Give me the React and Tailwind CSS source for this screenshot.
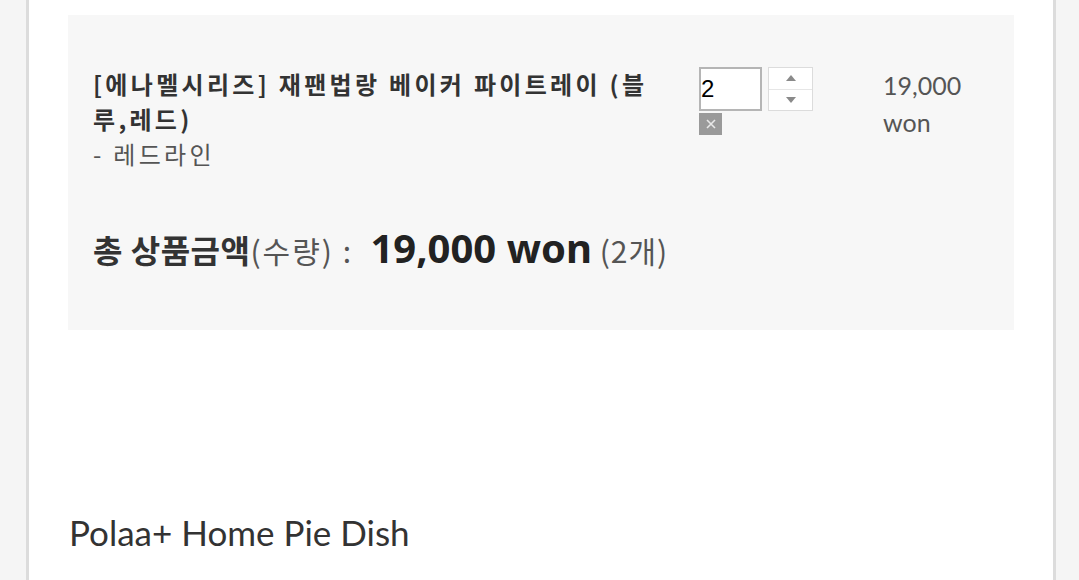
import React from 'react';

const kr = { fontFamily: '"Noto Sans CJK KR", "Noto Sans", sans-serif' };
const latin = { fontFamily: 'Lato, "Noto Sans CJK KR", sans-serif' };

const QuantityBox = () => (
  <div className="flex flex-col">
    <div className="flex gap-[6px]">
      <div className="w-[63px] h-[44px] border-2 border-[#b5b5b5] bg-white flex items-center">
        <span className="text-[24px] leading-none text-black" style={{ fontFamily: '"Liberation Sans", sans-serif' }}>
          2
        </span>
      </div>
      <div className="w-[45px] h-[44px] border border-[#dcdcdc] bg-white flex flex-col">
        <div className="flex-1 flex items-center justify-center border-b border-[#e6e6e6]">
          <svg width="10" height="6" viewBox="0 0 10 6">
            <path d="M5 0 L10 6 L0 6 Z" fill="#8a8a8a" />
          </svg>
        </div>
        <div className="flex-1 flex items-center justify-center">
          <svg width="10" height="6" viewBox="0 0 10 6">
            <path d="M0 0 L10 0 L5 6 Z" fill="#8a8a8a" />
          </svg>
        </div>
      </div>
    </div>
    <div className="mt-[2px] w-[23px] h-[22px] bg-[#9a9a9a] flex items-center justify-center">
      <svg width="10" height="10" viewBox="0 0 10 10">
        <path d="M1 1 L9 9 M9 1 L1 9" stroke="#e8e8e8" strokeWidth="1.6" />
      </svg>
    </div>
  </div>
);

const App = () => {
  return (
    <div className="h-screen overflow-hidden bg-[#f5f5f5] flex">
      <div className="ml-[26px] w-[1030px] h-full bg-white border-x-[3px] border-[#dcdcdc] px-[39px] pt-[15px]">
        {/* Cart item box */}
        <div className="bg-[#f7f7f7] h-[315px] pl-[25px] pt-[51px]">
          <div className="flex">
            <div className="w-[606px] text-[24px] leading-[35px] text-[#333] tracking-[3.3px]" style={kr}>
              <p className="font-bold">
                [에나멜시리즈] 재팬법랑 베이커 파이트레이 (블
                <br />
                루,레드)
              </p>
              <p className="text-[#555]">- 레드라인</p>
            </div>
            <div className="pt-[1px]">
              <QuantityBox />
            </div>
            <div className="ml-[70px] text-[25px] leading-[37px] text-[#555] mt-[1px]" style={latin}>
              19,000
              <br />
              won
            </div>
          </div>

          <div className="mt-[47px] flex items-baseline text-[#333]" style={kr}>
            <span className="text-[32px] font-bold tracking-[0.5px]">총 상품금액</span>
            <span className="text-[30px] text-[#555] tracking-[2px]">(수량)&nbsp;:&nbsp;&nbsp;</span>
            <span className="text-[40px] font-bold text-[#222]" style={{ fontFamily: '"Noto Sans", sans-serif' }}>
              19,000 won
            </span>
            <span className="text-[30px] text-[#555] tracking-[1px]">&nbsp;(2개)</span>
          </div>
        </div>

        {/* Next product */}
        <div className="pt-[185px] pl-[1px]">
          <h2 className="text-[35px] text-[#333] leading-none" style={latin}>
            Polaa+ Home Pie Dish
          </h2>
        </div>
      </div>
    </div>
  );
};

export default App;
